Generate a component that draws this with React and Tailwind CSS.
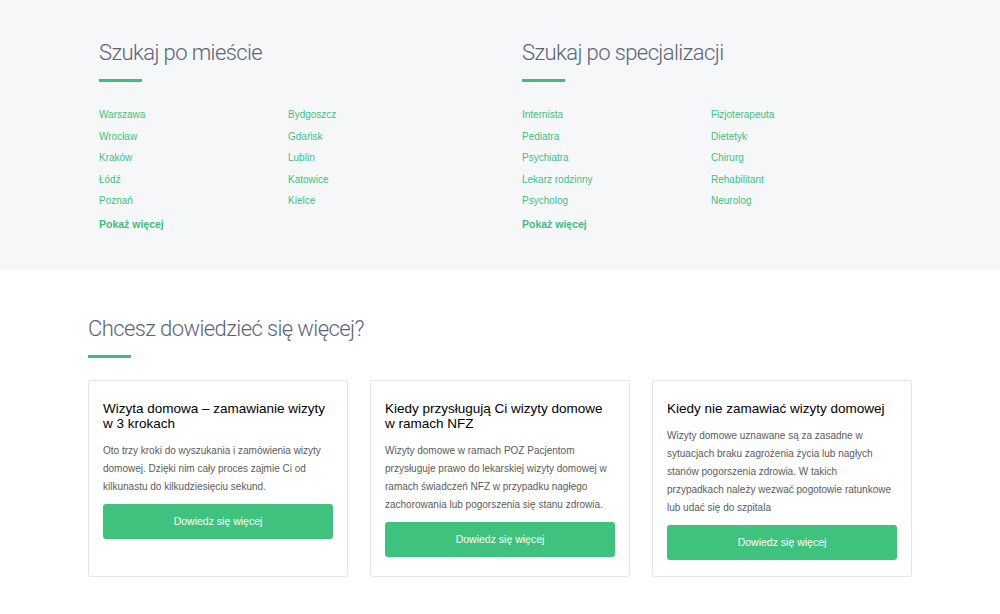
const CITIES = [
  ["Warszawa", "Wrocław", "Kraków", "Łódź", "Poznań"],
  ["Bydgoszcz", "Gdańsk", "Lublin", "Katowice", "Kielce"],
];

const SPECS = [
  ["Internista", "Pediatra", "Psychiatra", "Lekarz rodzinny", "Psycholog"],
  ["Fizjoterapeuta", "Dietetyk", "Chirurg", "Rehabilitant", "Neurolog"],
];

const ARTICLES = [
  {
    title: "Wizyta domowa – zamawianie wizyty w 3 krokach",
    text: "Oto trzy kroki do wyszukania i zamówienia wizyty domowej. Dzięki nim cały proces zajmie Ci od kilkunastu do kilkudziesięciu sekund.",
  },
  {
    title: "Kiedy przysługują Ci wizyty domowe w ramach NFZ",
    text: "Wizyty domowe w ramach POZ Pacjentom przysługuje prawo do lekarskiej wizyty domowej w ramach świadczeń NFZ w przypadku nagłego zachorowania lub pogorszenia się stanu zdrowia.",
  },
  {
    title: "Kiedy nie zamawiać wizyty domowej",
    text: "Wizyty domowe uznawane są za zasadne w sytuacjach braku zagrożenia życia lub nagłych stanów pogorszenia zdrowia. W takich przypadkach należy wezwać pogotowie ratunkowe lub udać się do szpitala",
  },
];

function SectionTitle({ children }) {
  return (
    <div>
      <h2 className="text-[22px] leading-[28px] font-light tracking-[-0.6px] text-[#5a6576] font-['Roboto',sans-serif]">
        {children}
      </h2>
      <div className="mt-[12px] h-[3px] w-[43px] bg-[#3fbf7f]" />
    </div>
  );
}

function LinkBlock({ title, columns }) {
  return (
    <div className="w-[423px]">
      <SectionTitle>{title}</SectionTitle>
      <div className="mt-[22px] grid grid-cols-[189px_189px]">
        {columns.map((col, i) => (
          <ul key={i}>
            {col.map((name) => (
              <li key={name} className="h-[21.6px] text-[10px] leading-[21.6px] text-[#3fbf80]">
                {name}
              </li>
            ))}
          </ul>
        ))}
      </div>
      <p className="mt-[2px] text-[10.5px] leading-[21.6px] font-bold text-[#3dbd7d]">Pokaż więcej</p>
    </div>
  );
}

function ArticleCard({ title, text }) {
  return (
    <div className="rounded-[3px] border border-[#e3e5e8] bg-white px-[14px] pt-[20px] pb-[16px]">
      <h3 className="text-[13.5px] leading-[15px] font-medium text-black">{title}</h3>
      <p className="mt-[11px] pr-[3px] text-[10px] leading-[18px] text-[#5b5b5b]">{text}</p>
      <button className="mt-[8px] h-[35px] w-full rounded-[3px] bg-[#3ec27e] text-[10.5px] font-medium text-white">
        Dowiedz się więcej
      </button>
    </div>
  );
}

export default function App() {
  return (
    <div className="min-h-[614px] w-[1000px] bg-white font-['Liberation_Sans',Arial,sans-serif]">
      <section className="h-[270px] bg-[#f6f7f9] pl-[99px] pt-[39px]">
        <div className="flex">
          <LinkBlock title="Szukaj po mieście" columns={CITIES} />
          <LinkBlock title="Szukaj po specjalizacji" columns={SPECS} />
        </div>
      </section>

      <section className="px-[88px] pt-[45px]">
        <SectionTitle>Chcesz dowiedzieć się więcej?</SectionTitle>
        <div className="mt-[22px] grid w-[824px] grid-cols-3 gap-[22px]">
          {ARTICLES.map((a) => (
            <ArticleCard key={a.title} {...a} />
          ))}
        </div>
      </section>
    </div>
  );
}
